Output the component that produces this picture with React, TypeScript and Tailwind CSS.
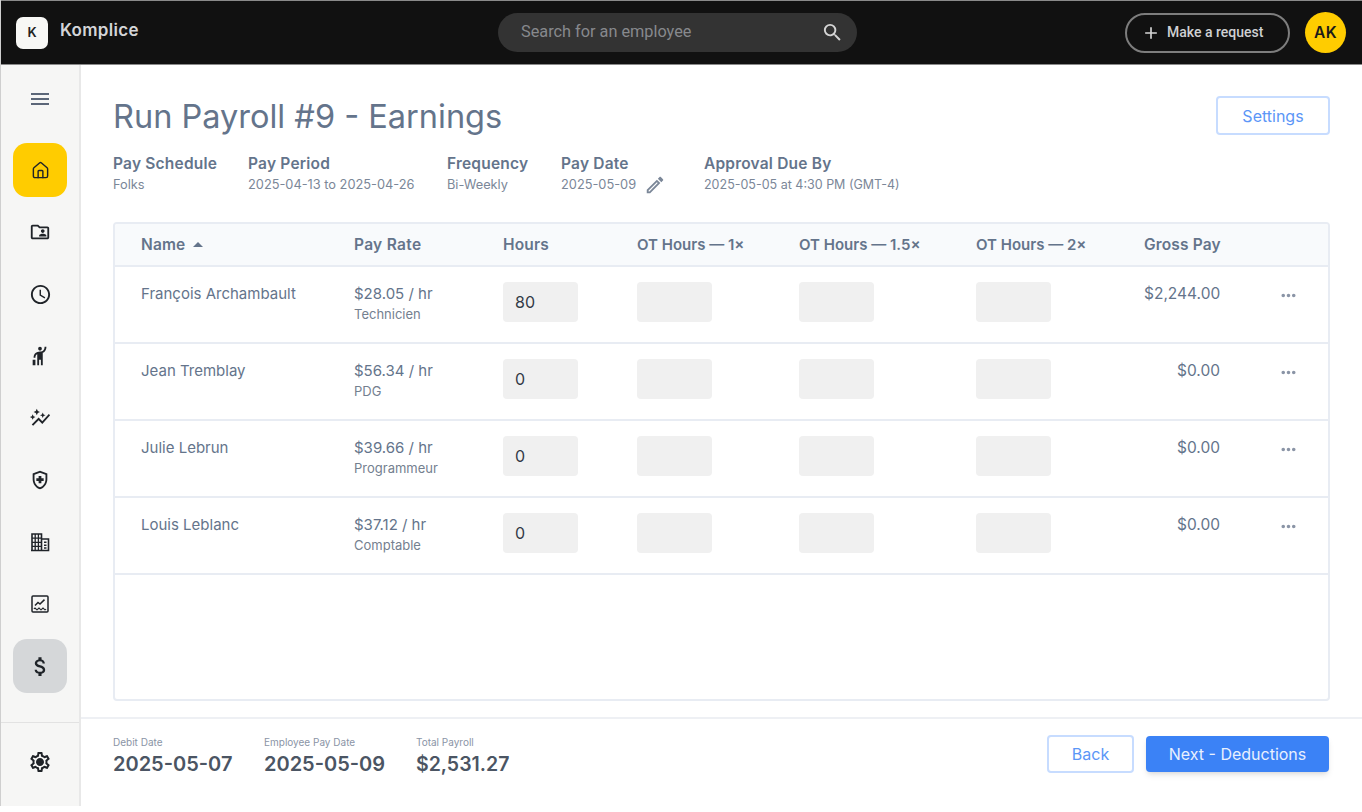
import {
  MdOutlineFolderShared,
  MdAccessTime,
  MdOutlineHail,
  MdOutlineAutoGraph,
  MdOutlineHealthAndSafety,
  MdAttachMoney,
  MdOutlineSettings,
  MdMoreHoriz,
  MdArrowDropUp,
  MdOutlineEdit,
  MdSearch,
  MdMenu,
  MdAdd,
} from 'react-icons/md'
import { House } from 'lucide-react'

const employees = [
  { name: 'François Archambault', rate: '$28.05 / hr', title: 'Technicien', hours: '80', gross: '$2,244.00' },
  { name: 'Jean Tremblay', rate: '$56.34 / hr', title: 'PDG', hours: '0', gross: '$0.00' },
  { name: 'Julie Lebrun', rate: '$39.66 / hr', title: 'Programmeur', hours: '0', gross: '$0.00' },
  { name: 'Louis Leblanc', rate: '$37.12 / hr', title: 'Comptable', hours: '0', gross: '$0.00' },
]

const meta = [
  { label: 'Pay Schedule', value: 'Folks', width: 'w-[135px]' },
  { label: 'Pay Period', value: '2025-04-13 to 2025-04-26', width: 'w-[199px]' },
  { label: 'Frequency', value: 'Bi-Weekly', width: 'w-[114px]' },
]

const columns = 'grid grid-cols-[213px_149px_134px_162px_177px_168px_76px_1fr]'

function BuildingIcon() {
  return (
    <svg width="22" height="22" viewBox="0 0 22 22" fill="none" stroke="currentColor" strokeWidth="1.6">
      <path d="M3 19.5V3h9.5v16.5M12.5 8H19.5V19.5H2" />
      <path d="M3 7.2h9.5M3 11.3h9.5M3 15.4h9.5M6.2 3v16.5M9.4 3v16.5" strokeWidth="1.3" />
      <path d="M15 11.2h2.5M15 14.2h2.5M15 17h2.5" strokeWidth="1.5" />
    </svg>
  )
}

function ChartIcon() {
  return (
    <svg width="22" height="22" viewBox="0 0 22 22" fill="none" stroke="currentColor">
      <rect x="3" y="3" width="16" height="16" rx="1" strokeWidth="1.5" />
      <path d="M6 12.5l3-3 2 1.6 4.5-4.5" strokeWidth="1.5" />
      <path d="M5 16q1-1.6 2 0t2 0t2 0t2 0t2 0t2 0" strokeWidth="1.2" />
    </svg>
  )
}

const navIcons = [
  <MdOutlineFolderShared size={22} />,
  <MdAccessTime size={23} />,
  <MdOutlineHail size={22} />,
  <MdOutlineAutoGraph size={22} />,
  <MdOutlineHealthAndSafety size={22} />,
  <BuildingIcon />,
  <ChartIcon />,
]

function Sidebar() {
  return (
    <aside className="w-[80px] shrink-0 bg-[#f6f6f5] border-r-2 border-[#e8e8e8] flex flex-col">
      <div className="h-[67px] flex items-center justify-center text-[#5b6678]">
        <MdMenu size={24} />
      </div>
      <div className="flex flex-col items-center text-[#1f2328]">
        <div className="w-[54px] h-[54px] rounded-[14px] bg-[#ffcc00] flex items-center justify-center mb-[4px] mt-[11px]">
          <House size={19} strokeWidth={1.8} />
        </div>
        {navIcons.map((icon, i) => (
          <div key={i} className="h-[62px] w-full flex items-center justify-center">
            {icon}
          </div>
        ))}
        <div className="w-[54px] h-[54px] rounded-[14px] bg-[#d5d7d9] flex items-center justify-center mt-[4px]">
          <MdAttachMoney size={25} />
        </div>
      </div>
      <div className="mt-auto h-[84px] border-t border-[#e2e2e2] flex items-center justify-center text-[#1f2328]">
        <div className="relative w-[24px] h-[24px] -mt-[5px]">
          <MdOutlineSettings size={24} />
          <span className="absolute left-[9px] top-[9px] w-[6px] h-[6px] rounded-full bg-[#1f2328]" />
        </div>
      </div>
    </aside>
  )
}

function Header() {
  return (
    <header className="h-[65px] shrink-0 bg-[#111111] border-t border-b border-[#8a8a8a] flex items-center pl-[15px] pr-[16px] relative">
      <div className="w-[32px] h-[32px] rounded-[7px] bg-[#f7f7f5] flex items-center justify-center text-[13px] font-semibold text-[#222]">
        K
      </div>
      <span className="ml-[12px] -mt-[4px] text-[17px] font-semibold tracking-[0.3px] text-[#d4d5d8]">Komplice</span>

      <div className="absolute left-[497px] top-[12px] w-[359px] h-[39px] rounded-full bg-[#333333] flex items-center justify-between pl-[23px] pr-[13px]">
        <span className="text-[16.3px] text-[#87898d] [font-family:Roboto,sans-serif]">Search for an employee</span>
        <MdSearch size={23} className="text-[#d5d5d5]" />
      </div>

      <div className="ml-auto flex items-center gap-[15px]">
        <button className="w-[165px] h-[40px] rounded-full border-2 border-[#7d7d7d] flex items-center pl-[14px] gap-[6px] text-[14px] font-medium text-[#cfd0d3] [font-family:Roboto,sans-serif]">
          <MdAdd size={20} className="text-[#d5d5d5]" />
          Make a request
        </button>
        <div className="w-[41px] h-[41px] rounded-full bg-[#ffcc00] flex items-center justify-center text-[15.5px] font-semibold text-[#1a1a1a] tracking-[0.5px]">
          AK
        </div>
      </div>
    </header>
  )
}

function Table() {
  return (
    <div className="mx-[32px] mt-[28px] h-[479px] rounded-[4px] border-2 border-[#e8ecf3] overflow-hidden">
      <div className={`${columns} h-[43px] items-center pl-[26px] bg-[#f8fafc] border-b-2 border-[#e8ecf3] text-[15.5px] leading-[24px] font-semibold text-[#64748b]`}>
        <div className="flex items-center tracking-[0.01em]">
          Name
          <MdArrowDropUp size={24} className="ml-[1px] text-[#64748b]" />
        </div>
        <div className="tracking-[0.02em]">Pay Rate</div>
        <div className="tracking-[0.01em]">Hours</div>
        <div className="whitespace-nowrap text-[15px]">OT Hours — 1×</div>
        <div className="whitespace-nowrap text-[15px]">OT Hours — 1.5×</div>
        <div className="whitespace-nowrap text-[15px]">OT Hours — 2×</div>
        <div className="whitespace-nowrap text-right tracking-[0.01em]">Gross Pay</div>
        <div />
      </div>
      {employees.map((e) => (
        <div key={e.name} className={`${columns} h-[77px] pl-[26px] pt-[15px] border-b-2 border-[#e8ecf3] text-[#64748b]`}>
          <div className="text-[15px] leading-[24px]">{e.name}</div>
          <div>
            <div className="text-[15px] leading-[24px]">{e.rate}</div>
            <div className="text-[13px] leading-[17px] text-[#74808f]">{e.title}</div>
          </div>
          <input
            readOnly
            value={e.hours}
            className="w-[75px] h-[40px] rounded-[4px] bg-[#f0f0f0] pl-[12px] text-[16px] text-[#333b47] outline-none"
          />
          <div className="w-[75px] h-[40px] rounded-[4px] bg-[#f0f0f0]" />
          <div className="w-[75px] h-[40px] rounded-[4px] bg-[#f0f0f0]" />
          <div className="w-[75px] h-[40px] rounded-[4px] bg-[#f0f0f0]" />
          <div className="text-[15.5px] leading-[24px] text-right">{e.gross}</div>
          <div className="pl-[58px] mt-[1px] h-[24px] flex items-center">
            <MdMoreHoriz size={21} className="text-[#8a94a6]" />
          </div>
        </div>
      ))}
    </div>
  )
}

function Footer() {
  return (
    <footer className="mt-auto h-[89px] border-t-2 border-[#eef0f4] flex items-start pl-[32px] pr-[33px] pt-[17px]">
      <div className="w-[151px]">
        <div className="text-[10px] leading-[12px] text-[#8a94a6]">Debit Date</div>
        <div className="mt-[2px] text-[20px] leading-[28px] font-semibold text-[#4b5563]">2025-05-07</div>
      </div>
      <div className="w-[152px]">
        <div className="text-[10px] leading-[12px] text-[#8a94a6]">Employee Pay Date</div>
        <div className="mt-[2px] text-[20px] leading-[28px] font-semibold text-[#4b5563]">2025-05-09</div>
      </div>
      <div>
        <div className="text-[10px] leading-[12px] text-[#8a94a6]">Total Payroll</div>
        <div className="mt-[2px] text-[19.5px] leading-[28px] font-semibold text-[#4b5563]">$2,531.27</div>
      </div>
      <div className="ml-auto flex items-center gap-[12px] -mt-[1px]">
        <button className="w-[87px] h-[38px] rounded-[4px] border-2 border-[#c7dcff] text-[16px] text-[#5b96f7]">Back</button>
        <button className="w-[183px] h-[36px] rounded-[4px] bg-[#3b82f6] text-[16px] text-[#e8f0fe] shadow-md">Next - Deductions</button>
      </div>
    </footer>
  )
}

export default function App() {
  return (
    <div className="h-[806px] flex flex-col bg-white border-l border-[#cfcfcf] [font-family:Inter,sans-serif]">
      <Header />
      <div className="flex flex-1 min-h-0">
        <Sidebar />
        <main className="flex-1 flex flex-col min-w-0">
          <div className="flex items-start justify-between px-[32px] pt-[31px]">
            <h1 className="text-[32.5px] leading-[40px] text-[#64748b] mt-[1px]">Run Payroll #9 - Earnings</h1>
            <button className="w-[114px] h-[39px] rounded-[4px] border-2 border-[#c7dcff] text-[16px] text-[#5b96f7]">Settings</button>
          </div>
          <div className="flex pl-[32px] mt-[16px]">
            {meta.map((m) => (
              <div key={m.label} className={m.width}>
                <div className="text-[15.5px] leading-[22px] tracking-[0.2px] font-semibold text-[#64748b]">{m.label}</div>
                <div className="mt-[1px] text-[12.8px] leading-[18px] text-[#7b8798]">{m.value}</div>
              </div>
            ))}
            <div className="w-[143px]">
              <div className="text-[15.5px] leading-[22px] tracking-[0.2px] font-semibold text-[#64748b]">Pay Date</div>
              <div className="mt-[1px] text-[12.8px] leading-[18px] text-[#7b8798] flex items-center gap-[8px]">
                2025-05-09
                <MdOutlineEdit size={22} className="text-[#7b8798] -my-[2px]" />
              </div>
            </div>
            <div>
              <div className="text-[15.5px] leading-[22px] tracking-[0.2px] font-semibold text-[#64748b]">Approval Due By</div>
              <div className="mt-[1px] text-[12.5px] leading-[18px] text-[#7b8798]">2025-05-05 at 4:30 PM (GMT-4)</div>
            </div>
          </div>
          <Table />
          <Footer />
        </main>
      </div>
    </div>
  )
}
